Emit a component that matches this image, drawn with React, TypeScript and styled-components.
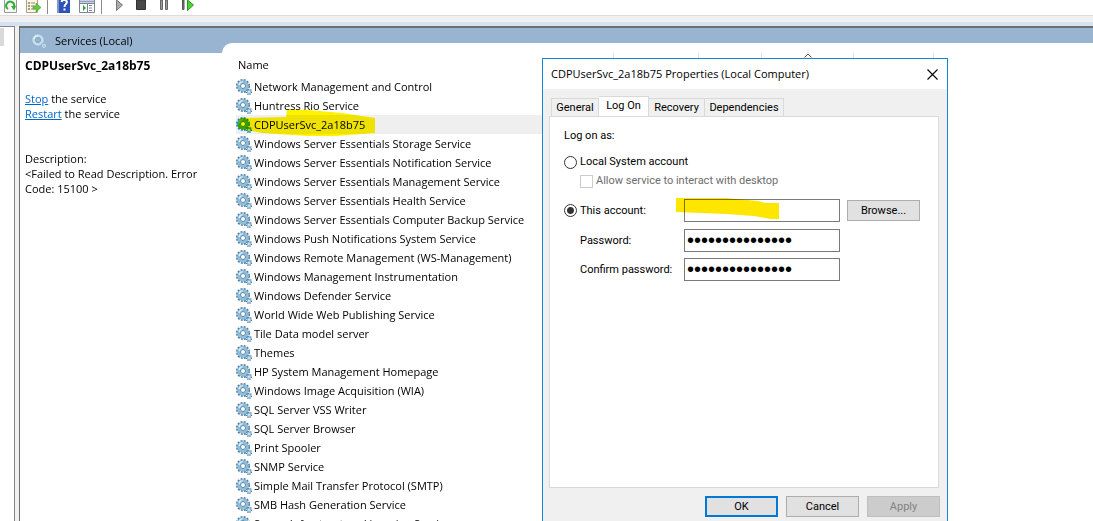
import React, { useState } from "react";
import styled, { createGlobalStyle, css } from "styled-components";

const shell = `"Open Sans", "Noto Sans", sans-serif`;
const dlg = `Roboto, "Liberation Sans", sans-serif`;

const Global = createGlobalStyle`
  * { box-sizing: border-box; }
  body { margin: 0; background: #f0f0f0; color: #000; font: 11px/15px ${shell}; }
`;

const Page = styled.div`
  position: relative;
  display: flex;
  flex-direction: column;
  height: 100vh;
  overflow: hidden;
`;

const Toolbar = styled.div`
  display: flex;
  flex: none;
  height: 16px;
  overflow: hidden;
  background: #fff;
  border-bottom: 1px solid #dcdcdc;
`;

const ToolButton = styled.button<{ $gap?: number }>`
  display: block;
  flex: none;
  width: 16px;
  height: 16px;
  margin: 0 0 0 ${(p) => p.$gap ?? 8}px;
  padding: 0;
  border: 0;
  background: none;
  svg { display: block; }
`;

const ToolRule = styled.span`
  flex: none;
  width: 1px;
  height: 14px;
  margin-left: 6px;
  background: #8c8c8c;
`;

const Workspace = styled.div`
  display: flex;
  flex: 1;
  min-height: 0;
  margin-top: 6px;
  padding-top: 4px;
  background: #d5e2f0;
`;

const TreePane = styled.div`
  flex: none;
  width: 15px;
  padding-top: 1px;
  background: #fff;
  border-top: 1px solid #828790;
  border-right: 1px solid #828790;
`;

const TreeSelection = styled.div`
  width: 4px;
  height: 18px;
  background: #d9d9d9;
`;

const Splitter = styled.div`
  flex: none;
  width: 4px;
  background: #f0f0f0;
`;

const Panel = styled.main`
  display: flex;
  flex: 1;
  min-width: 0;
  background: #99b4d1;
  border-top: 2px solid #6d6d6d;
  border-left: 1px solid #6d6d6d;
`;

const Side = styled.div`
  display: flex;
  flex-direction: column;
  flex: none;
  width: 202px;
`;

const PanelTitle = styled.header`
  display: flex;
  align-items: center;
  gap: 8px;
  height: 25px;
  padding-left: 11px;
  font-size: 11px;
`;

const Info = styled.section`
  flex: 1;
  padding: 5px 4px 0 5px;
  background: #fff;
`;

const ServiceTitle = styled.h1`
  margin: 0 0 17px;
  font-size: 12px;
  line-height: 16px;
`;

const Line = styled.p<{ $spaced?: boolean }>`
  margin: ${(p) => (p.$spaced ? 30 : 0)}px 0 0;
`;

const Action = styled.a`
  color: #0066cc;
`;

const ListPane = styled.div`
  position: relative;
  flex: 1;
  min-width: 0;
  margin-top: 15px;
  padding: 10px 0 0 14px;
  overflow: hidden;
  background: #fff;
  border-top-left-radius: 10px;
`;

const Table = styled.table`
  width: 697px;
  border-collapse: collapse;
  table-layout: fixed;
`;

const HeadCell = styled.th<{ $w: number }>`
  width: ${(p) => p.$w}px;
  height: 24px;
  padding: 0 0 2px 2px;
  border-right: 1px solid #e2e2e2;
  font-weight: 400;
  text-align: left;
  vertical-align: middle;
`;

const SortCaret = styled.svg`
  display: block;
  margin: -11px auto 0;
`;

const Row = styled.tr<{ $selected?: boolean }>`
  height: 19px;
  ${(p) => p.$selected && css`td { background: #efefef; }`}
`;

const Cell = styled.td`
  padding: 0;
`;

const CellBody = styled.div`
  display: flex;
  align-items: center;
  gap: 2px;
  height: 19px;
  white-space: nowrap;
`;

const Marker = styled.svg<{ $x: number; $y: number }>`
  position: absolute;
  left: ${(p) => p.$x}px;
  top: ${(p) => p.$y}px;
  pointer-events: none;
  mix-blend-mode: multiply;
`;

const Dialog = styled.section`
  position: absolute;
  left: 542px;
  top: 58px;
  width: 406px;
  padding-bottom: 12px;
  background: #f0f0f0;
  border: 1px solid #1883d7;
  font: 11px/16px ${dlg};
`;

const DialogTitle = styled.header`
  display: flex;
  align-items: center;
  justify-content: space-between;
  height: 30px;
  padding: 0 9px 0 8px;
  background: #fff;
  font: 11px/16px ${shell};
`;

const CloseButton = styled.button`
  width: 11px;
  height: 11px;
  padding: 0;
  border: 0;
  background: none;
  svg { display: block; }
`;

const Tabs = styled.div`
  display: flex;
  align-items: flex-end;
  padding: 7px 8px 0;
`;

const Tab = styled.button<{ $w: number; $active?: boolean }>`
  width: ${(p) => p.$w}px;
  height: 18px;
  padding: 0;
  border: 1px solid #d9d9d9;
  border-width: 1px 1px 0 0;
  background: #f0f0f0;
  color: #000;
  font: inherit;
  white-space: nowrap;
  &:first-child { border-left-width: 1px; }
  ${(p) =>
    p.$active &&
    css`
      position: relative;
      height: 21px;
      margin-bottom: -1px;
      padding-bottom: 2px;
      background: #fff;
    `}
`;

const TabPanel = styled.form`
  position: relative;
  height: 372px;
  margin: 0 8px 0 6px;
  padding: 11px 18px 0 14px;
  background: #fff;
  border: 1px solid #d9d9d9;
`;

const FormRow = styled.div<{ $top?: number; $indent?: boolean }>`
  display: flex;
  align-items: center;
  margin-top: ${(p) => p.$top ?? 0}px;
  padding-left: ${(p) => (p.$indent ? 16 : 0)}px;
`;

const Choice = styled.label<{ $disabled?: boolean }>`
  display: flex;
  align-items: center;
  gap: 3px;
  height: 16px;
  color: ${(p) => (p.$disabled ? "#6d6d6d" : "#000")};
`;

const Radio = styled.input.attrs({ type: "radio" })`
  appearance: none;
  width: 13px;
  height: 13px;
  margin: 0;
  border: 1px solid #333;
  border-radius: 50%;
  background: #fff;
  &:checked { background: radial-gradient(circle, #333 0 3px, #fff 4px); }
`;

const Check = styled.input.attrs({ type: "checkbox" })`
  appearance: none;
  width: 13px;
  height: 13px;
  margin: 0;
  border: 1px solid #ccc;
  background: #fff;
`;

const FieldRow = styled.div<{ $top: number }>`
  display: grid;
  grid-template-columns: 120px 156px 80px;
  align-items: center;
  margin-top: ${(p) => p.$top}px;
`;

const FieldLabel = styled.label`
  padding-left: 16px;
`;

const Field = styled.input`
  width: 156px;
  height: 23px;
  padding: 0 3px;
  border: 1px solid #7a7a7a;
  border-radius: 0;
  background: #fff;
  font: 11px ${dlg};
  outline: 0;
  &[type="password"] { padding: 0 2px; font: 20px "Liberation Sans", sans-serif; }
`;

const Button = styled.button<{ $primary?: boolean; $inline?: boolean }>`
  width: 73px;
  height: 21px;
  margin-left: ${(p) => (p.$inline ? 7 : 0)}px;
  padding: 0;
  border: ${(p) => (p.$primary ? "2px solid #0078d7" : "1px solid #adadad")};
  background: #e1e1e1;
  color: #000;
  font: inherit;
  line-height: 16px;
  &:disabled { background: #ccc; border-color: #bfbfbf; color: #838383; }
`;

const Footer = styled.footer`
  display: flex;
  justify-content: flex-end;
  gap: 8px;
  padding: 8px 7px 0;
`;

const gearTones = {
  normal: { teeth: "#4a7ba3", body: "#8fbdd9", rim: "#4f83a8", hole: "#fff", shine: "#def0f9" },
  pale: { teeth: "#8fb2cf", body: "#c3ddec", rim: "#7fa6c4", hole: "#99b4d1", shine: "#def0f9" },
  selected: { teeth: "#1d7fd0", body: "#35a84a", rim: "#1d7d3a", hole: "#fff", shine: "#5cc25a" },
};

const Gears = ({ tone = "normal" }: { tone?: keyof typeof gearTones }) => {
  const c = gearTones[tone];
  return (
    <svg width="16" height="16" viewBox="0 0 16 16" fill="none" aria-hidden="true">
      <circle cx="7" cy="7" r="6" stroke={c.teeth} strokeWidth="2" strokeDasharray="1.9 1.24" />
      <circle cx="7" cy="7" r="4.3" stroke={c.body} strokeWidth="3" />
      <circle cx="7" cy="7" r="2.5" fill={c.hole} stroke={c.rim} strokeWidth="1" />
      <path d="M3 6A4.3 4.3 0 0 1 6.6 2.7" stroke={c.shine} strokeWidth="1.3" />
      <circle cx="13" cy="12.8" r="2.4" stroke={c.teeth} strokeWidth="1.5" strokeDasharray="1.1 0.8" />
      <circle cx="13" cy="12.8" r="1.5" fill={c.hole} stroke={c.body} strokeWidth="1.3" />
    </svg>
  );
};

const services = [
  "Network Management and Control",
  "Huntress Rio Service",
  "CDPUserSvc_2a18b75",
  "Windows Server Essentials Storage Service",
  "Windows Server Essentials Notification Service",
  "Windows Server Essentials Management Service",
  "Windows Server Essentials Health Service",
  "Windows Server Essentials Computer Backup Service",
  "Windows Push Notifications System Service",
  "Windows Remote Management (WS-Management)",
  "Windows Management Instrumentation",
  "Windows Defender Service",
  "World Wide Web Publishing Service",
  "Tile Data model server",
  "Themes",
  "HP System Management Homepage",
  "Windows Image Acquisition (WIA)",
  "SQL Server VSS Writer",
  "SQL Server Browser",
  "Print Spooler",
  "SNMP Service",
  "Simple Mail Transfer Protocol (SMTP)",
  "SMB Hash Generation Service",
  "Server Infrastructure Licensing Service",
];

const ServicesToolbar = () => (
  <Toolbar role="toolbar" aria-label="Services">
    <ToolButton $gap={3} aria-label="Refresh">
      <svg width="16" height="16" viewBox="0 0 16 16" fill="none">
        <path d="M1.5 0V12.5H13.5V0" fill="#f7f7f2" stroke="#9a9a9a" />
        <path d="M5 9A4 4 0 1 1 11 7" stroke="#2fae3c" strokeWidth="2" />
        <path d="M8 6H13L11 10.5Z" fill="#2fae3c" />
      </svg>
    </ToolButton>
    <ToolButton $gap={6} aria-label="Export list">
      <svg width="16" height="16" viewBox="0 0 16 16" fill="none">
        <path d="M1.5 0V12.5H12.5V0" fill="#fdf6d8" stroke="#a8a28a" />
        <path d="M3 3H5M3 6H5M3 9H5" stroke="#444" />
        <path d="M6 3H10M6 6H9M6 9H10" stroke="#8c86b0" />
        <path d="M8 6H11V3L16 7.5L11 12V9H8Z" fill="#6cc644" stroke="#3f9b2b" strokeWidth="0.6" />
      </svg>
    </ToolButton>
    <ToolRule />
    <ToolButton $gap={8} aria-label="Help">
      <svg width="16" height="16" viewBox="0 0 16 16" fill="none">
        <path d="M1 0H14V13H1Z" fill="#2c53b8" />
        <path d="M1 0H3V13H1Z" fill="#8098c9" />
        <path d="M5.5 2C6-1 11.5-.5 10.8 2.5C10.4 4.3 8.5 4.2 8.5 7" stroke="#fff" strokeWidth="2" />
        <path d="M7.5 8.5H9.5V10.5H7.5Z" fill="#fff" />
      </svg>
    </ToolButton>
    <ToolButton $gap={7} aria-label="Show action pane">
      <svg width="16" height="16" viewBox="0 0 16 16" fill="none">
        <path d="M.5 0V12.5H15.5V0" fill="#fff" stroke="#7b8797" />
        <path d="M1 1.5H15" stroke="#8fa3bd" strokeWidth="2" />
        <path d="M8.5 3V12M1 3.5H15" stroke="#7b8797" />
        <path d="M4 5L7 8L4 11Z" fill="#36a03a" />
        <path d="M10 5.5H13M10 8H13M10 10.5H13" stroke="#7b8797" />
      </svg>
    </ToolButton>
    <ToolRule />
    <ToolButton $gap={10} aria-label="Start service">
      <svg width="16" height="16" viewBox="0 0 16 16"><path d="M4.5 0L10.5 5L4.5 10.5Z" fill="#aaa" stroke="#777" /></svg>
    </ToolButton>
    <ToolButton $gap={6} aria-label="Stop service">
      <svg width="16" height="16" viewBox="0 0 16 16"><path d="M2.5 0H11.5V9.5H2.5Z" fill="#484848" stroke="#333" /></svg>
    </ToolButton>
    <ToolButton $gap={8} aria-label="Pause service">
      <svg width="16" height="16" viewBox="0 0 16 16"><path d="M2.5 0H4.5V9.5H2.5ZM7.5 0H9.5V9.5H7.5Z" fill="#999" stroke="#666" /></svg>
    </ToolButton>
    <ToolButton $gap={7} aria-label="Restart service">
      <svg width="16" height="16" viewBox="0 0 16 16">
        <path d="M1.5 0H3V9.5H1.5Z" fill="#777" stroke="#555" />
        <path d="M6.5 0L12.5 5L6.5 10.5Z" fill="#4cd137" stroke="#249a1c" />
      </svg>
    </ToolButton>
  </Toolbar>
);

const PropertiesDialog = () => {
  const [account, setAccount] = useState("this");
  return (
    <Dialog role="dialog" aria-labelledby="dialog-title">
      <DialogTitle>
        <span id="dialog-title">CDPUserSvc_2a18b75 Properties (Local Computer)</span>
        <CloseButton aria-label="Close">
          <svg width="11" height="11" viewBox="0 0 11 11"><path d="M.5 .5L10.5 10.5M10.5 .5L.5 10.5" stroke="#000" strokeWidth="1.1" /></svg>
        </CloseButton>
      </DialogTitle>
      <Tabs role="tablist">
        <Tab type="button" role="tab" $w={48}>General</Tab>
        <Tab type="button" role="tab" $w={50} $active aria-selected>Log On</Tab>
        <Tab type="button" role="tab" $w={56}>Recovery</Tab>
        <Tab type="button" role="tab" $w={79}>Dependencies</Tab>
      </Tabs>
      <TabPanel onSubmit={(e) => e.preventDefault()}>
        <FormRow>Log on as:</FormRow>
        <FormRow $top={10}>
          <Choice>
            <Radio name="account" checked={account === "system"} onChange={() => setAccount("system")} />
            Local System account
          </Choice>
        </FormRow>
        <FormRow $top={3} $indent>
          <Choice $disabled>
            <Check disabled />
            Allow service to interact with desktop
          </Choice>
        </FormRow>
        <FieldRow $top={10}>
          <Choice>
            <Radio name="account" checked={account === "this"} onChange={() => setAccount("this")} />
            This account:
          </Choice>
          <Field aria-label="Account name" />
          <Button type="button" $inline>Browse...</Button>
        </FieldRow>
        <FieldRow $top={7}>
          <FieldLabel htmlFor="pw">Password:</FieldLabel>
          <Field id="pw" type="password" defaultValue="xxxxxxxxxxxxxxx" />
        </FieldRow>
        <FieldRow $top={6}>
          <FieldLabel htmlFor="pw2">Confirm password:</FieldLabel>
          <Field id="pw2" type="password" defaultValue="xxxxxxxxxxxxxxx" />
        </FieldRow>
        <Marker $x={126} $y={80} width="104" height="24" viewBox="0 0 104 24">
          <path d="M0 1L50 1L82 4L90 6L103 6V22H95L78 19L50 17L0 15Z" fill="#ffe600" />
        </Marker>
      </TabPanel>
      <Footer>
        <Button type="button" $primary>OK</Button>
        <Button type="button">Cancel</Button>
        <Button type="button" disabled>Apply</Button>
      </Footer>
    </Dialog>
  );
};

export default function App() {
  return (
    <>
      <Global />
      <Page>
        <ServicesToolbar />
        <Workspace>
          <TreePane><TreeSelection /></TreePane>
          <Splitter />
          <Panel>
            <Side>
              <PanelTitle><Gears tone="pale" />Services (Local)</PanelTitle>
              <Info>
                <ServiceTitle>CDPUserSvc_2a18b75</ServiceTitle>
                <Line><Action href="#stop">Stop</Action> the service</Line>
                <Line><Action href="#restart">Restart</Action> the service</Line>
                <Line $spaced>Description:</Line>
                <Line>&lt;Failed to Read Description. Error Code: 15100 &gt;</Line>
              </Info>
            </Side>
            <ListPane>
              <Table>
                <thead>
                  <tr>
                    <HeadCell $w={377}>Name</HeadCell>
                    <HeadCell $w={85} aria-label="Description" />
                    <HeadCell $w={63} aria-label="Status" />
                    <HeadCell $w={92} aria-label="Startup Type">
                      <SortCaret width="8" height="5" viewBox="0 0 8 5" fill="none"><path d="M.5 4.5L4 1L7.5 4.5" stroke="#555" /></SortCaret>
                    </HeadCell>
                    <HeadCell $w={80} aria-label="Log On As" />
                  </tr>
                </thead>
                <tbody>
                  {services.map((name, i) => (
                    <Row key={name} $selected={i === 2}>
                      <Cell colSpan={5}><CellBody><Gears tone={i === 2 ? "selected" : "normal"} />{name}</CellBody></Cell>
                    </Row>
                  ))}
                </tbody>
              </Table>
              <Marker $x={16} $y={65} width="140" height="30" viewBox="0 0 140 30">
                <path d="M2 10L48 9L49 1L70 2L104 5L137 10V25L98 28H70L24 25L0 20Z" fill="#fff200" />
              </Marker>
            </ListPane>
          </Panel>
        </Workspace>
        <PropertiesDialog />
      </Page>
    </>
  );
}
